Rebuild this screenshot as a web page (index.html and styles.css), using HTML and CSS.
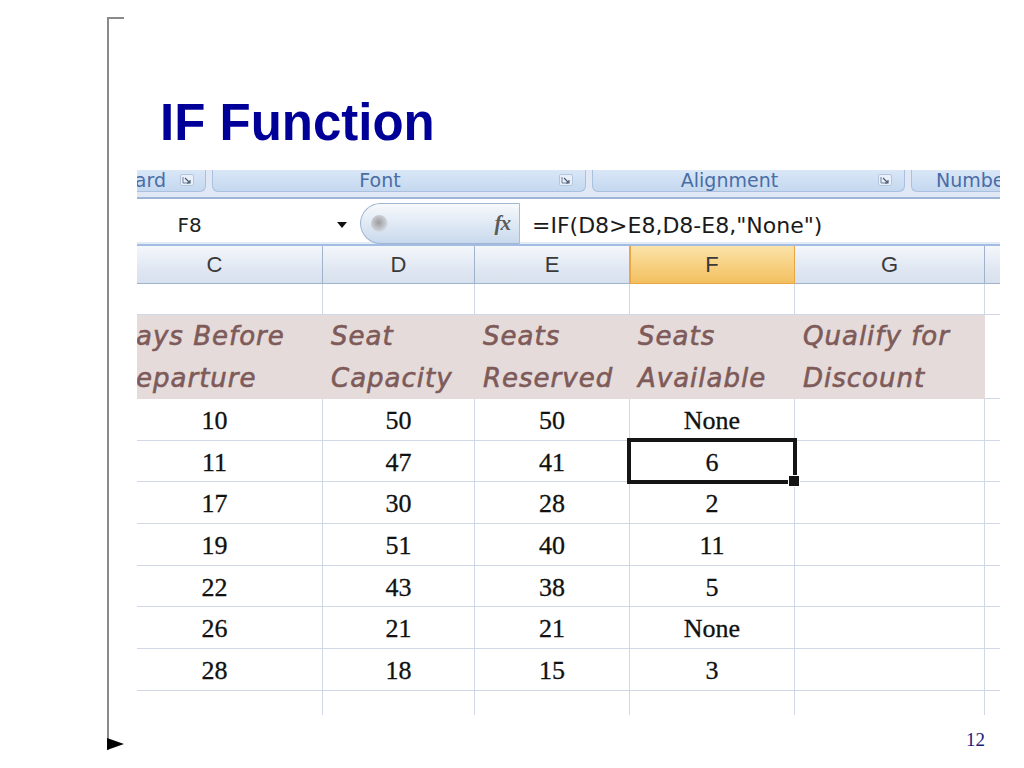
FILE: index.html
```html
<!DOCTYPE html>
<html lang="en">
<head>
<meta charset="utf-8">
<title>IF Function</title>
<link rel="stylesheet" href="styles.css">
</head>
<body>
<div class="slide">
  <div class="frame">
    <h1 class="title">IF Function</h1>
    <div class="shot">
      <div class="ribbon">
        <div class="group g-clip"><span class="glabel">Clipboard</span><svg class="launch" viewBox="0 0 14 12" width="14" height="12"><rect x="0.5" y="0.5" width="13" height="11" rx="1.5" fill="#e9f0f9" stroke="#b4c6de"/><path d="M3 3v6h6" fill="none" stroke="#6d7f99" stroke-width="1"/><path d="M5 4l5 5M10 6v3H7" fill="none" stroke="#4a5b73" stroke-width="1.2"/></svg></div>
        <div class="group g-font"><span class="glabel">Font</span><svg class="launch" viewBox="0 0 14 12" width="14" height="12"><rect x="0.5" y="0.5" width="13" height="11" rx="1.5" fill="#e9f0f9" stroke="#b4c6de"/><path d="M3 3v6h6" fill="none" stroke="#6d7f99" stroke-width="1"/><path d="M5 4l5 5M10 6v3H7" fill="none" stroke="#4a5b73" stroke-width="1.2"/></svg></div>
        <div class="group g-align"><span class="glabel">Alignment</span><svg class="launch" viewBox="0 0 14 12" width="14" height="12"><rect x="0.5" y="0.5" width="13" height="11" rx="1.5" fill="#e9f0f9" stroke="#b4c6de"/><path d="M3 3v6h6" fill="none" stroke="#6d7f99" stroke-width="1"/><path d="M5 4l5 5M10 6v3H7" fill="none" stroke="#4a5b73" stroke-width="1.2"/></svg></div>
        <div class="group g-num"><span class="glabel">Number</span></div>
      </div>
      <div class="fbar">
        <div class="namebox">F8</div>
        <div class="nb-drop"><span class="caret"></span></div>
        <div class="pill"><span class="dot"></span><span class="fx">fx</span></div>
        <div class="formula">=IF(D8&gt;E8,D8-E8,"None")</div>
      </div>
      <div class="sheet">
        <div class="row colhead">
          <div class="ch">C</div><div class="ch">D</div><div class="ch">E</div><div class="ch ch-sel">F</div><div class="ch">G</div><div class="ch"></div>
        </div>
        <div class="row r-blank">
          <div class="c"></div><div class="c"></div><div class="c"></div><div class="c"></div><div class="c"></div><div class="c"></div>
        </div>
        <div class="row r-head">
          <div class="h">Days Before<br>Departure</div><div class="h">Seat<br>Capacity</div><div class="h">Seats<br>Reserved</div><div class="h">Seats<br>Available</div><div class="h">Qualify for<br>Discount</div><div class="c"></div>
        </div>
        <div class="row r-data"><div class="c">10</div><div class="c">50</div><div class="c">50</div><div class="c">None</div><div class="c"></div><div class="c"></div></div>
        <div class="row r-data"><div class="c">11</div><div class="c">47</div><div class="c">41</div><div class="c sel">6</div><div class="c"></div><div class="c"></div></div>
        <div class="row r-data"><div class="c">17</div><div class="c">30</div><div class="c">28</div><div class="c">2</div><div class="c"></div><div class="c"></div></div>
        <div class="row r-data"><div class="c">19</div><div class="c">51</div><div class="c">40</div><div class="c">11</div><div class="c"></div><div class="c"></div></div>
        <div class="row r-data"><div class="c">22</div><div class="c">43</div><div class="c">38</div><div class="c">5</div><div class="c"></div><div class="c"></div></div>
        <div class="row r-data"><div class="c">26</div><div class="c">21</div><div class="c">21</div><div class="c">None</div><div class="c"></div><div class="c"></div></div>
        <div class="row r-data"><div class="c">28</div><div class="c">18</div><div class="c">15</div><div class="c">3</div><div class="c"></div><div class="c"></div></div>
        <div class="row r-last">
          <div class="c"></div><div class="c"></div><div class="c"></div><div class="c"></div><div class="c"></div><div class="c"></div>
        </div>
      </div>
    </div>
    <div class="pagenum">12</div>
  </div>
</div>
</body>
</html>
```

FILE: styles.css
```css
* { box-sizing: border-box; }
html, body { margin: 0; padding: 0; background: #ffffff; }
.slide {
  width: 1024px;
  height: 768px;
  overflow: hidden;
  padding-top: 17px;
}
.frame {
  position: relative;
  margin-left: 107px;
  height: 733px;
  border-left: 2px solid #8a8a8a;
  display: flex;
  flex-direction: column;
}
.frame::before {
  content: "";
  position: absolute;
  top: 0;
  left: -2px;
  width: 17px;
  height: 2px;
  background: #8a8a8a;
}
.frame::after {
  content: "";
  position: absolute;
  top: 721px;
  left: -2px;
  width: 0;
  height: 0;
  border-left: 17px solid #000;
  border-top: 6.5px solid transparent;
  border-bottom: 6.5px solid transparent;
}
.title {
  margin: 81px 0 0 0;
  padding-left: 51px;
  height: 50px;
  font-family: "Liberation Sans", Arial, sans-serif;
  font-weight: bold;
  font-size: 51px;
  line-height: 50px;
  color: #000099;
}
.shot {
  margin: 22px 0 0 28px;
  width: 863px;
  height: 552px;
  overflow: hidden;
  background: #fff;
}
/* ribbon */
.ribbon {
  display: flex;
  height: 29px;
  gap: 6px;
  background: #dfe8f4;
  border-bottom: 2px solid #9db5d6;
  padding-bottom: 5px;
}
.group {
  display: flex;
  align-items: center;
  height: 22px;
  background: linear-gradient(#d9e7f7, #c4d8ef);
  border: 1px solid #a9c0de;
  border-top: none;
  border-radius: 0 0 6px 6px;
  overflow: hidden;
  flex: none;
}
.glabel {
  font-family: "DejaVu Sans", Verdana, sans-serif;
  font-size: 19px;
  line-height: 20px;
  align-self: flex-start;
  color: #4a6da6;
  white-space: nowrap;
}
.launch { flex: none; display: block; margin-bottom: 2px; }
.g-clip { width: 69px; justify-content: flex-end; padding-right: 11px; border-left: none; border-radius: 0 0 6px 0; }
.g-clip .glabel { margin-right: 14px; }
.g-font { width: 374px; padding-right: 12px; }
.g-font .glabel, .g-align .glabel { flex: 1; text-align: center; padding-right: 12px; }
.g-align { width: 313px; padding-right: 12px; }
.g-num { width: 120px; padding-left: 24px; border-right: none; }
/* formula bar */
.fbar {
  display: flex;
  height: 47px;
  border-bottom: 2px solid #a3bde2;
  box-shadow: inset 0 -2px 0 #e3ebf6;
  background: #fff;
}
.namebox {
  width: 105px;
  text-align: center;
  font-family: "DejaVu Sans", Verdana, sans-serif;
  font-size: 20px;
  color: #222;
  padding-top: 14px;
}
.nb-drop {
  width: 118px;
  display: flex;
  justify-content: flex-end;
  padding-right: 13px;
  padding-top: 23px;
}
.caret {
  width: 0;
  height: 0;
  border-top: 6px solid #111;
  border-left: 5px solid transparent;
  border-right: 5px solid transparent;
}
.pill {
  width: 160px;
  height: 41px;
  margin-top: 4px;
  border: 1px solid #9fb5d2;
  border-right: 1px solid #a9bcd3;
  border-radius: 21px 0 0 21px;
  background: linear-gradient(#f7f9fc, #dbe6f3 60%, #c9d9ed);
  display: flex;
  align-items: center;
  padding-left: 10px;
  padding-right: 9px;
}
.dot {
  width: 17px;
  height: 17px;
  border-radius: 50%;
  background: radial-gradient(circle at 45% 45%, #9c9c9c, #c8ccd2 55%, rgba(230,235,242,0) 75%);
}
.fx {
  margin-left: auto;
  font-family: "Liberation Serif", "Times New Roman", serif;
  font-style: italic;
  font-weight: bold;
  font-size: 21px;
  color: #5a5a5a;
  letter-spacing: -1px;
}
.formula {
  flex: 1;
  padding-left: 12px;
  padding-top: 14px;
  font-family: "DejaVu Sans", Verdana, sans-serif;
  font-size: 22px;
  color: #1a1a1a;
  white-space: nowrap;
}
/* sheet */
.sheet { margin-left: -30px; }
.row {
  display: grid;
  grid-template-columns: 216px 152px 155px 165px 190px 80px;
}
.colhead { height: 38px; }
.ch {
  background: linear-gradient(#f4f7fb, #e2e9f3 55%, #d7e0ed);
  border-right: 1px solid #9fb3cd;
  border-bottom: 1px solid #9fb3cd;
  font-family: "Liberation Sans", Arial, sans-serif;
  font-size: 22px;
  line-height: 37px;
  text-align: center;
  color: #3a3a3a;
}
.ch-sel {
  background: linear-gradient(#fbe3a9, #f7cf7f 55%, #f3c061);
  border-right: 1px solid #e9a647;
  border-bottom: 1px solid #e9a647;
  box-shadow: inset 1px 0 0 #e9a647;
}
.c {
  border-right: 1px solid #d0d7e5;
  border-bottom: 1px solid #d0d7e5;
}
.r-blank { height: 31px; }
.r-head { height: 84px; }
.r-head .h {
  background: #e5dbda;
  font-family: "DejaVu Sans", Verdana, sans-serif;
  font-style: oblique;
  font-size: 26px;
  line-height: 42px;
  letter-spacing: 1px;
  color: #7e5a59;
  -webkit-text-stroke: 0.6px #7e5a59;
  padding-left: 8px;
  white-space: nowrap;
  overflow: hidden;
}
.r-data { height: 41.7px; }
.r-data .c {
  font-family: "Liberation Serif", "Times New Roman", serif;
  font-size: 26px;
  line-height: 37.7px;
  padding-top: 3px;
  text-align: center;
  color: #111;
  -webkit-text-stroke: 0.3px #111;
}
.r-last { height: 31px; }
.r-last .c { border-bottom: none; }
.sel { position: relative; }
.sel::after {
  content: "";
  position: absolute;
  left: -3px;
  top: -3px;
  right: -3px;
  bottom: -3px;
  border: 4px solid #151515;
}
.sel::before {
  content: "";
  position: absolute;
  right: -6px;
  bottom: -6px;
  width: 10px;
  height: 10px;
  background: #151515;
  border: 1px solid #fff;
  z-index: 1;
}
.pagenum {
  margin-top: 14px;
  padding-right: 39px;
  text-align: right;
  font-family: "Liberation Serif", "Times New Roman", serif;
  font-size: 19px;
  line-height: 21px;
  color: #1c1c78;
}
```
